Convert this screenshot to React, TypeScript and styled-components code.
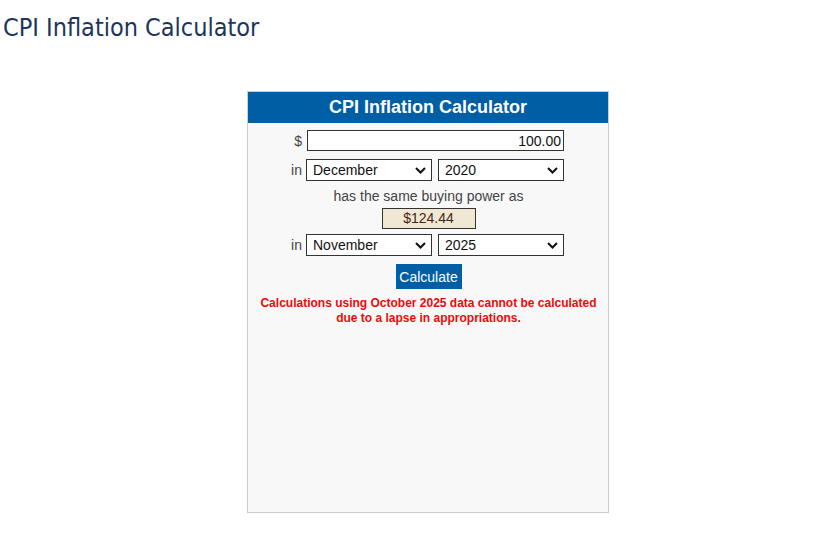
import React from "react";
import styled, { createGlobalStyle } from "styled-components";

const Global = createGlobalStyle`
  html, body { margin: 0; padding: 0; background: #ffffff; }
  body { font-family: "Liberation Sans", Arial, sans-serif; }
`;

const Page = styled.div`
  width: 820px;
  height: 542px;
  box-sizing: border-box;
  padding-top: 10px;
`;

const Heading = styled.h1`
  margin: 0 0 0 3px;
  font-family: "DejaVu Sans Condensed", "DejaVu Sans", sans-serif;
  font-weight: normal;
  font-size: 25px;
  line-height: 36px;
  color: #1c355e;
`;

const Center = styled.div`
  padding-left: 247px;
  padding-top: 45px;
`;

const Panel = styled.div`
  width: 362px;
  height: 422px;
  box-sizing: border-box;
  border: 1px solid #cccccc;
  background: #f8f8f8;
`;

const PanelHeader = styled.div`
  height: 31px;
  background: #005ea5;
  color: #ffffff;
  font-weight: bold;
  font-size: 18px;
  line-height: 30px;
  text-align: center;
`;

const Body = styled.div`
  display: flex;
  flex-direction: column;
  align-items: center;
  padding-top: 7px;
`;

const Grid = styled.div<{ $top: number }>`
  display: grid;
  grid-template-columns: 12px 258px;
  column-gap: 4px;
  align-items: center;
  margin-top: ${(p) => p.$top}px;
  margin-right: 2px;
`;

const Label = styled.span`
  font-size: 14px;
  color: #444444;
  text-align: right;
`;

const Amount = styled.input`
  box-sizing: border-box;
  width: 257px;
  height: 21px;
  margin-left: 1px;
  border: 1px solid #333333;
  background: #ffffff;
  font-family: "Liberation Sans", Arial, sans-serif;
  font-size: 14px;
  text-align: right;
  padding: 0 2px;
  color: #111111;
  outline: none;
`;

const Pair = styled.div`
  display: flex;
  gap: 6px;
`;

const SelectWrap = styled.div`
  position: relative;
  width: 126px;
  height: 22px;
`;

const Select = styled.select`
  appearance: none;
  box-sizing: border-box;
  width: 126px;
  height: 22px;
  border: 1px solid #333333;
  border-radius: 0;
  background: #ffffff;
  font-family: "Liberation Sans", Arial, sans-serif;
  font-size: 14px;
  color: #111111;
  padding: 0 0 0 6px;
  outline: none;
`;

const Chevron = styled.svg`
  position: absolute;
  right: 6px;
  top: 8px;
  width: 11px;
  height: 7px;
  pointer-events: none;
`;

const Sentence = styled.div`
  margin-top: 7px;
  font-size: 14px;
  color: #444444;
  line-height: 16px;
  margin-left: 1px;
`;

const Result = styled.div`
  box-sizing: border-box;
  margin-top: 4px;
  width: 94px;
  height: 21px;
  border: 1px solid #333333;
  background: #efe9d4;
  color: #4a2318;
  font-size: 14px;
  line-height: 19px;
  text-align: center;
  margin-left: 1px;
`;

const Button = styled.button`
  margin-top: 8px;
  margin-left: 1px;
  width: 66px;
  height: 25px;
  border: none;
  background: #005ea5;
  color: #ffffff;
  font-family: "Liberation Sans", Arial, sans-serif;
  font-size: 14px;
  padding: 0;
`;

const Notice = styled.div`
  margin-top: 7px;
  margin-left: 1px;
  font-size: 12px;
  font-weight: bold;
  line-height: 15px;
  color: #ee0a0a;
  text-align: center;
`;

const months = [
  "January", "February", "March", "April", "May", "June",
  "July", "August", "September", "October", "November", "December",
];
const years = Array.from({ length: 2025 - 1913 + 1 }, (_, i) => String(2025 - i));

function Dropdown({ value, options }: { value: string; options: string[] }) {
  return (
    <SelectWrap>
      <Select defaultValue={value}>
        {options.map((o) => (
          <option key={o} value={o}>{o}</option>
        ))}
      </Select>
      <Chevron viewBox="0 0 11 7">
        <path d="M1 1 L5.5 5.5 L10 1" fill="none" stroke="#111" strokeWidth="2" />
      </Chevron>
    </SelectWrap>
  );
}

export default function App() {
  return (
    <>
      <Global />
      <Page>
        <Heading>CPI Inflation Calculator</Heading>
        <Center>
          <Panel>
            <PanelHeader>CPI Inflation Calculator</PanelHeader>
            <Body>
              <Grid $top={0}>
                <Label>$</Label>
                <Amount defaultValue="100.00" />
              </Grid>
              <Grid $top={8}>
                <Label>in</Label>
                <Pair>
                  <Dropdown value="December" options={months} />
                  <Dropdown value="2020" options={years} />
                </Pair>
              </Grid>
              <Sentence>has the same buying power as</Sentence>
              <Result>$124.44</Result>
              <Grid $top={5}>
                <Label>in</Label>
                <Pair>
                  <Dropdown value="November" options={months} />
                  <Dropdown value="2025" options={years} />
                </Pair>
              </Grid>
              <Button>Calculate</Button>
              <Notice>
                Calculations using October 2025 data cannot be calculated
                <br />
                due to a lapse in appropriations.
              </Notice>
            </Body>
          </Panel>
        </Center>
      </Page>
    </>
  );
}
